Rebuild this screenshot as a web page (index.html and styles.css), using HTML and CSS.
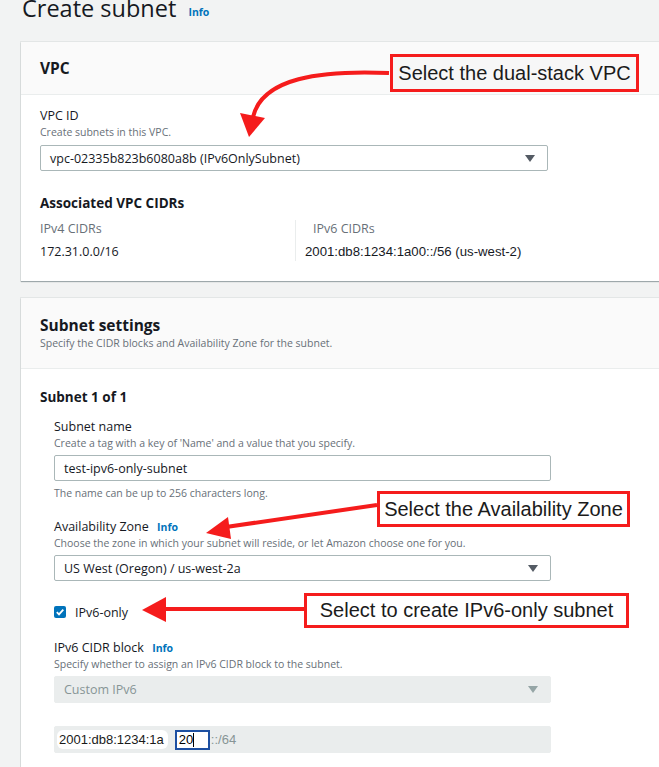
FILE: index.html
```
<!DOCTYPE html>
<html lang="en">
<head>
  <meta charset="UTF-8">
  <title>Create subnet</title>
  <link rel="stylesheet" href="styles.css">
</head>
<body>
  <div class="shot">
    <div class="page">
      <h1 class="page-title">Create subnet <a class="info" href="#">Info</a></h1>

      <section class="card">
        <div class="card-head">
          <h2>VPC</h2>
        </div>
        <div class="card-body">
          <div class="label">VPC ID</div>
          <div class="hint">Create subnets in this VPC.</div>
          <div class="select wide">
            <span>vpc-02335b823b6080a8b (IPv6OnlySubnet)</span>
            <span class="caret"></span>
          </div>
          <h3 class="sub-title">Associated VPC CIDRs</h3>
          <div class="cidrs">
            <div class="cidr-col">
              <div class="muted">IPv4 CIDRs</div>
              <div class="value">172.31.0.0/16</div>
            </div>
            <div class="cidr-col right">
              <div class="muted">IPv6 CIDRs</div>
              <div class="value edited">2001:db8:1234:1a00::/56 (us-west-2)</div>
            </div>
          </div>
        </div>
      </section>

      <section class="card second">
        <div class="card-head tall">
          <h2>Subnet settings</h2>
          <div class="hint">Specify the CIDR blocks and Availability Zone for the subnet.</div>
        </div>
        <div class="card-body">
          <h3 class="count">Subnet 1 of 1</h3>
          <div class="fields">
            <div class="label">Subnet name</div>
            <div class="hint">Create a tag with a key of 'Name' and a value that you specify.</div>
            <div class="input">test-ipv6-only-subnet</div>
            <div class="hint after">The name can be up to 256 characters long.</div>

            <div class="label gap">Availability Zone <a class="info" href="#">Info</a></div>
            <div class="hint">Choose the zone in which your subnet will reside, or let Amazon choose one for you.</div>
            <div class="select">
              <span>US West (Oregon) / us-west-2a</span>
              <span class="caret"></span>
            </div>

            <label class="check-row">
              <span class="check">
                <svg width="12" height="12" viewBox="0 0 12 12"><path d="M2.8 6.2 L5 8.4 L9.3 3.6" fill="none" stroke="#fff" stroke-width="1.8"/></svg>
              </span>
              IPv6-only
            </label>

            <div class="label gap-sm">IPv6 CIDR block <a class="info" href="#">Info</a></div>
            <div class="hint">Specify whether to assign an IPv6 CIDR block to the subnet.</div>
            <div class="select disabled">
              <span>Custom IPv6</span>
              <span class="caret"></span>
            </div>

            <div class="cidr-input">
              <span class="prefix">2001:db8:1234:1a</span>
              <span class="octet">20<span class="cursor"></span></span>
              <span class="suffix">::/64</span>
            </div>
          </div>
        </div>
      </section>
    </div>

    <!-- annotations drawn over the screenshot -->
    <div class="note note-vpc">Select the dual-stack VPC</div>
    <div class="note note-az">Select the Availability Zone</div>
    <div class="note note-v6">Select to create IPv6-only subnet</div>

    <svg class="arrows" width="659" height="767" viewBox="0 0 659 767">
      <path d="M389 73 C 320 70, 262 78, 253 117" fill="none" stroke="#f51c1c" stroke-width="4"/>
      <polygon points="240,113 265,118 249,137" fill="#f51c1c"/>
      <path d="M377 505 L 226 527" fill="none" stroke="#f51c1c" stroke-width="4"/>
      <polygon points="228,517 231,539 206,533" fill="#f51c1c"/>
      <path d="M304 609 L 162 609" fill="none" stroke="#f51c1c" stroke-width="4"/>
      <polygon points="166,597 166,622 142,610" fill="#f51c1c"/>
    </svg>
  </div>
</body>
</html>
```

FILE: styles.css
```
:root {
  --text: #16191f;
  --muted: #687078;
  --link: #0073bb;
  --line: #eaeded;
  --field-border: #aab7b8;
  --note-red: #f51c1c;
  --font-ui: "Open Sans", "Noto Sans", sans-serif;
  --font-note: "Liberation Sans", Arial, sans-serif;
}
html, body {
  margin: 0;
  height: 100%;
}
body {
  background: #f2f3f3;
  font-family: var(--font-ui);
  color: var(--text);
  overflow: hidden;
}
.shot {
  position: relative;
  width: 659px;
  height: 767px;
  overflow: hidden;
}
.page {
  padding-left: 21px;
}
.page-title {
  margin: -7px 0 0 1px;
  font-size: 23.5px;
  line-height: 30px;
  font-weight: 400;
  height: 49px;
}
.page-title .info {
  margin-left: 6px;
  vertical-align: 1px;
}
.info {
  color: var(--link);
  font-size: 10.5px;
  font-weight: 700;
  text-decoration: none;
  margin-left: 5px;
}

.card {
  background: #fff;
  width: 680px;
  box-shadow: 0 1px 1px rgba(0, 28, 36, 0.3), 0 0 0 1px #e3e6e6;
}
.card.second {
  margin-top: 17px;
}
.card-head {
  background: #fafafa;
  border-bottom: 1px solid var(--line);
  height: 53px;
  box-sizing: border-box;
  padding: 15px 19px 0;
}
.card-head.tall {
  height: 71px;
  padding-top: 16px;
}
.card-head h2 {
  margin: 0;
  font-size: 15.5px;
  line-height: 22px;
  font-weight: 700;
}
.card-body {
  padding: 12px 19px 20px;
}

.label {
  font-size: 12.5px;
  line-height: 18px;
}
.label.gap {
  margin-top: 18px;
}
.label.gap-sm {
  margin-top: 17px;
}
.hint {
  font-size: 10.5px;
  line-height: 14px;
  color: var(--muted);
}
.hint.after {
  margin-top: 5px;
}

.select, .input, .cidr-input {
  box-sizing: border-box;
  width: 497px;
  height: 26px;
  margin-top: 5px;
  border: 1px solid var(--field-border);
  border-radius: 2px;
  display: flex;
  align-items: center;
  justify-content: space-between;
  padding: 0 12px 0 9px;
  font-size: 12.5px;
}
.select.wide {
  width: 508px;
  margin-top: 6px;
}
.caret {
  width: 0;
  height: 0;
  border-left: 5px solid transparent;
  border-right: 5px solid transparent;
  border-top: 7px solid #545b64;
}
.select.disabled {
  background: var(--line);
  border-color: var(--line);
  color: #879596;
  height: 27px;
}
.select.disabled .caret {
  border-top-color: #95a5a6;
}

.sub-title {
  margin: 22px 0 0;
  font-size: 13.5px;
  line-height: 20px;
  font-weight: 700;
}
.cidrs {
  display: flex;
  margin-top: 7px;
}
.cidr-col {
  width: 255px;
}
.cidr-col.right {
  border-left: 1px solid var(--line);
  padding-left: 17px;
}
.muted {
  font-size: 12.5px;
  line-height: 18px;
  color: var(--muted);
}
.value {
  font-size: 12.5px;
  line-height: 18px;
  margin-top: 5px;
}
.value.edited {
  font-family: var(--font-note);
  font-size: 13.2px;
  margin-left: -8px;
}

.count {
  margin: 6px 0 0;
  font-size: 13.5px;
  line-height: 20px;
  font-weight: 700;
}
.fields {
  padding-left: 14px;
  margin-top: 11px;
}

.check-row {
  display: flex;
  align-items: center;
  gap: 9px;
  margin-top: 21px;
  height: 20px;
  font-size: 12.5px;
}
.check {
  width: 12px;
  height: 12px;
  border-radius: 2px;
  background: var(--link);
  display: flex;
}

.cidr-input {
  margin-top: 23px;
  height: 27px;
  background: var(--line);
  border-color: var(--line);
  justify-content: flex-start;
  padding: 0 0 0 2px;
  font-family: var(--font-note);
  font-size: 13px;
}
.prefix {
  background: #fff;
  padding: 2px 4px 2px 2px;
  border-radius: 6px;
  color: #1a1a1a;
}
.octet {
  box-sizing: border-box;
  width: 35px;
  height: 20px;
  margin-left: 7px;
  border: 2px solid #1d4fa1;
  background: #fff;
  color: #000;
  display: flex;
  align-items: center;
  padding-left: 2px;
}
.cursor {
  width: 1px;
  height: 14px;
  background: #000;
}
.suffix {
  color: #879596;
  margin-left: 1px;
}

.note {
  position: absolute;
  box-sizing: border-box;
  border: 3px solid var(--note-red);
  background: #fff;
  font-family: var(--font-note);
  font-size: 20px;
  color: #1b1b1b;
  display: flex;
  align-items: center;
  justify-content: center;
}
.note-vpc {
  left: 390px;
  top: 54px;
  width: 249px;
  height: 38px;
  background: #f7f7f7;
}
.note-az {
  left: 377px;
  top: 491px;
  width: 253px;
  height: 36px;
}
.note-v6 {
  left: 304px;
  top: 593px;
  width: 325px;
  height: 35px;
}
.arrows {
  position: absolute;
  left: 0;
  top: 0;
  pointer-events: none;
}
```
